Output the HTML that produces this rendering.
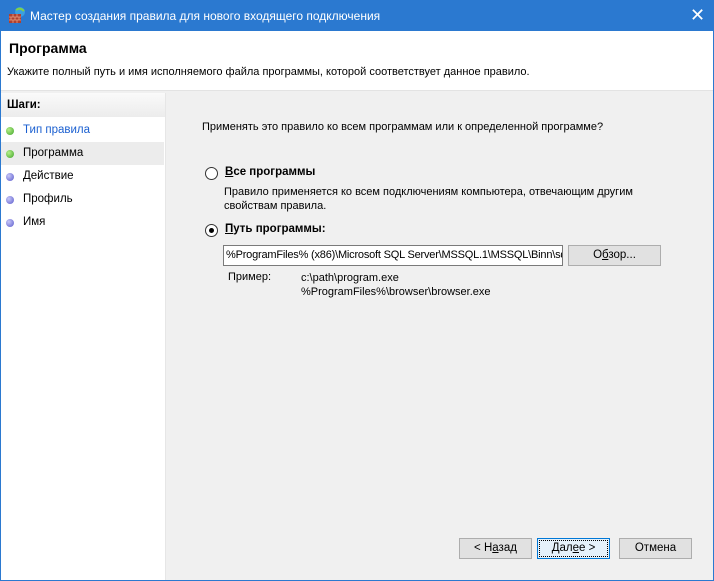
<!DOCTYPE html>
<html><head><meta charset="utf-8"><style>
*{margin:0;padding:0;box-sizing:border-box}
body{width:714px;height:581px;overflow:hidden;font-family:"Liberation Sans",sans-serif;font-size:12px;color:#000;background:#f0f0f0;position:relative}
.win{position:absolute;left:0;top:0;width:714px;height:581px;border:1px solid #2b79d0;border-top:none;background:#f0f0f0}
.title{position:absolute;left:0;top:0;width:714px;height:31px;background:#2b79d0;color:#fff;font-size:12px}
.title span{position:absolute;left:30px;top:9px}
.x{position:absolute;left:690px;top:7px;font-size:18px;font-weight:300;color:#fff;line-height:16px}
.hdr{position:absolute;left:1px;top:31px;width:712px;height:60px;background:#fff;border-bottom:1px solid #e3e3e3}
.abs{position:absolute;white-space:nowrap}
.left{position:absolute;left:1px;top:93px;width:165px;height:487px;background:#fff;border-right:1px solid #e6e6e6;font-size:11.5px}
.stephdr{position:absolute;left:0;top:0;width:164px;height:24px;background:linear-gradient(#fafafa,#ececec)}
.dot{position:absolute;width:8px;height:8px;border-radius:50%}
.g{background:radial-gradient(circle at 35% 35%,#b8f08a,#3ea42a)}
.p{background:radial-gradient(circle at 35% 35%,#c8c8f8,#5a5acc)}
.radio{position:absolute;width:13px;height:13px;border:1px solid #333;border-radius:50%;background:#fff}
.btn{position:absolute;height:21px;background:#e1e1e1;border:1px solid #adadad;text-align:center;line-height:19px;font-size:11.5px}
u{text-decoration:underline}
</style></head><body>
<div class="win"></div>
<div class="title">
<svg style="position:absolute;left:8px;top:6px" width="18" height="18" viewBox="0 0 18 18">
<circle cx="12" cy="6" r="5" fill="#3aa0e0"/><path d="M8 4 q4 -3 8 1" stroke="#7fd04a" stroke-width="2" fill="none"/>
<rect x="1" y="8" width="12" height="9" fill="#b04030"/>
<path d="M1 11h12M1 14h12M5 8v3M9 8v3M3 11v3M7 11v3M11 11v3M5 14v3M9 14v3" stroke="#e8a080" stroke-width="0.8"/>
</svg>
<span>Мастер создания правила для нового входящего подключения</span>
<div class="x">✕</div>
</div>
<div class="hdr">
<div class="abs" style="left:8px;top:9px;font-size:14px;font-weight:bold">Программа</div>
<div class="abs" style="left:6px;top:35px;font-size:11px">Укажите полный путь и имя исполняемого файла программы, которой соответствует данное правило.</div>
</div>
<div class="left">
<div class="stephdr"></div>
<div class="abs" style="left:6px;top:6px;font-weight:bold">Шаги:</div>
<div class="abs" style="left:0;top:49px;width:163px;height:23px;background:#ececec"></div>
<div class="dot g" style="left:5px;top:34px"></div><div class="abs" style="left:22px;top:31px;color:#1a5fd0">Тип правила</div>
<div class="dot g" style="left:5px;top:57px"></div><div class="abs" style="left:22px;top:54px">Программа</div>
<div class="dot p" style="left:5px;top:80px"></div><div class="abs" style="left:22px;top:77px">Действие</div>
<div class="dot p" style="left:5px;top:103px"></div><div class="abs" style="left:22px;top:100px">Профиль</div>
<div class="dot p" style="left:5px;top:126px"></div><div class="abs" style="left:22px;top:123px">Имя</div>
</div>
<div class="abs" style="left:202px;top:121px;font-size:11px">Применять это правило ко всем программам или к определенной программе?</div>
<div class="radio" style="left:205px;top:167px"></div>
<div class="abs" style="left:225px;top:166px;font-weight:bold;font-size:11.5px"><u>В</u>се программы</div>
<div class="abs" style="left:224px;top:185px;font-size:11px;line-height:14px">Правило применяется ко всем подключениям компьютера, отвечающим другим<br>свойствам правила.</div>
<div class="radio" style="left:205px;top:224px"></div>
<div class="dot" style="left:209px;top:228px;width:5px;height:5px;background:#000"></div>
<div class="abs" style="left:225px;top:223px;font-weight:bold;font-size:11.5px"><u>П</u>уть программы:</div>
<div class="abs" style="left:223px;top:245px;width:340px;height:21px;background:#fff;border:1px solid #7a7a7a;overflow:hidden;font-size:11px;line-height:19px;padding-left:2px;letter-spacing:-0.2px">%ProgramFiles% (x86)\Microsoft SQL Server\MSSQL.1\MSSQL\Binn\sqlservr.exe</div>
<div class="btn" style="left:568px;top:245px;width:93px">О<u>б</u>зор...</div>
<div class="abs" style="left:228px;top:271px;font-size:11px">Пример:</div>
<div class="abs" style="left:301px;top:271px;font-size:11px;line-height:14px">c:\path\program.exe<br>%ProgramFiles%\browser\browser.exe</div>
<div class="btn" style="left:459px;top:538px;width:73px">&lt; Н<u>а</u>зад</div>
<div class="btn" style="left:537px;top:538px;width:73px;background:#e5f1fb;border-color:#0078d7;outline:1px dotted #000;outline-offset:-3px">Дал<u>е</u>е &gt;</div>
<div class="btn" style="left:619px;top:538px;width:73px">Отмена</div>
</body></html>
